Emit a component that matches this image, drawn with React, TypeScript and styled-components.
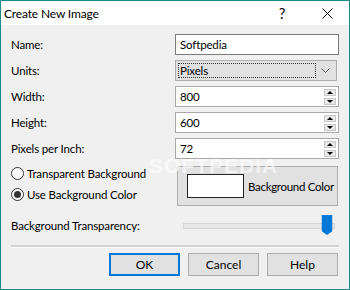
import * as React from "react";
import styled, { createGlobalStyle } from "styled-components";

const GlobalStyle = createGlobalStyle`
  html, body {
    margin: 0;
    padding: 0;
    background: #ffffff;
  }
  body {
    font-family: "Lato", "Liberation Sans", sans-serif;
    font-size: 11.5px;
    letter-spacing: -0.15px;
    color: #000;
  }
`;

const Window = styled.div`
  position: relative;
  width: 350px;
  height: 290px;
  box-sizing: border-box;
  border: 1px solid #1c8b8b;
  background: #f0f0f0;
  display: flex;
  flex-direction: column;
  overflow: hidden;
`;

const TitleBar = styled.div`
  height: 24px;
  background: #ffffff;
  display: flex;
  align-items: center;
  padding-left: 3px;
  font-size: 12px;
`;

const Title = styled.span`
  flex: 1;
`;

const TitleButton = styled.div<{ width: number }>`
  width: ${(props) => props.width}px;
  height: 24px;
  display: flex;
  align-items: center;
  justify-content: center;
  font-size: 15px;
`;

const Body = styled.div`
  flex: 1;
  padding: 9px 10px 0 10px;
  display: flex;
  flex-direction: column;
`;

const FormGrid = styled.div`
  display: grid;
  grid-template-columns: 164px 164px;
  grid-auto-rows: 21px;
  row-gap: 5px;
  align-items: center;
`;

const Label = styled.label`
  line-height: 21px;
  white-space: nowrap;
`;

const TextBox = styled.div`
  box-sizing: border-box;
  height: 21px;
  background: #fff;
  border: 1px solid #7a7a7a;
  display: flex;
  align-items: center;
  padding-left: 4px;
`;

const SpinBox = styled(TextBox)`
  padding-right: 1px;
  border-color: #a9a9a9;
`;

const SpinValue = styled.span`
  flex: 1;
`;

const SpinButtons = styled.div`
  display: flex;
  flex-direction: column;
  gap: 2px;
  margin-right: 1px;
`;

const SpinButton = styled.div`
  width: 12px;
  height: 7px;
  box-sizing: border-box;
  background: #e8e8e8;
  border: 1px solid #c8c8c8;
  display: flex;
  align-items: center;
  justify-content: center;
`;

const Combo = styled.div`
  box-sizing: border-box;
  height: 21px;
  background: #e1e1e1;
  border: 1px solid #adadad;
  display: flex;
  align-items: center;
  padding: 2px;
  margin-right: 2px;
`;

const ComboFocus = styled.div`
  flex: 1;
  height: 100%;
  box-sizing: border-box;
  border: 1px dotted #333;
  display: flex;
  align-items: center;
  padding-left: 1px;
`;

const ComboArrow = styled.div`
  width: 18px;
  display: flex;
  justify-content: center;
`;

const ColorSection = styled.div`
  margin-top: 7px;
  display: grid;
  grid-template-columns: 164px 164px;
`;

const RadioColumn = styled.div`
  display: flex;
  flex-direction: column;
  gap: 6px;
`;

const RadioRow = styled.div`
  height: 15px;
  display: flex;
  align-items: center;
  gap: 3px;
  white-space: nowrap;
`;

const RadioCircle = styled.div<{ checked?: boolean }>`
  width: 13px;
  height: 13px;
  box-sizing: border-box;
  border-radius: 50%;
  border: 1px solid #333;
  background: #fff;
  display: flex;
  align-items: center;
  justify-content: center;
  &::after {
    content: "";
    display: ${(props) => (props.checked ? "block" : "none")};
    width: 7px;
    height: 7px;
    border-radius: 50%;
    background: #333;
  }
`;

const ColorGroup = styled.div`
  margin: 0 1px 0 2px;
  height: 40px;
  box-sizing: border-box;
  background: #e1e1e1;
  border: 1px solid #adadad;
  display: flex;
  align-items: center;
  padding-left: 9px;
  gap: 4px;
  white-space: nowrap;
  letter-spacing: -0.3px;
`;

const Swatch = styled.div<{ color: string }>`
  width: 57px;
  height: 24px;
  flex-shrink: 0;
  box-sizing: border-box;
  background: ${(props) => props.color};
  border: 1px solid #222;
`;

const SliderRow = styled.div`
  margin-top: 9px;
  height: 20px;
  display: grid;
  grid-template-columns: 172px 1fr;
  align-items: center;
`;

const SliderTrack = styled.div`
  position: relative;
  height: 4px;
  margin-right: 4px;
  background: #e7e7e7;
  border: 1px solid #d6d6d6;
`;

const SliderThumb = styled.div`
  position: absolute;
  top: -9px;
  width: 11px;
  height: 20px;
  transform: translateX(-50%);
`;

const Separator = styled.div`
  margin-top: 10px;
  height: 2px;
  background: #d3d3d3;
  border-bottom: 1px solid #fafafa;
`;

const ButtonRow = styled.div`
  margin-top: 5px;
  display: flex;
  justify-content: flex-end;
  gap: 8px;
  padding-right: 1px;
`;

const Button = styled.button<{ primary?: boolean }>`
  width: 71px;
  height: 23px;
  box-sizing: border-box;
  background: #e1e1e1;
  border: ${(props) => (props.primary ? "2px solid #0078d7" : "1px solid #adadad")};
  font-family: inherit;
  font-size: 12px;
  color: #000;
  padding: 0;
`;

const Watermark = styled.div`
  position: absolute;
  left: 148px;
  top: 157px;
  font-family: "Liberation Sans", sans-serif;
  font-weight: bold;
  font-size: 21px;
  line-height: 15px;
  letter-spacing: 1px;
  color: rgba(255, 255, 255, 0.65);
  pointer-events: none;
`;

const Spin: React.FunctionComponent<{ value: string }> = ({ value }) => (
  <SpinBox>
    <SpinValue>{value}</SpinValue>
    <SpinButtons>
      <SpinButton>
        <svg width="6" height="3" viewBox="0 0 6 3">
          <polygon points="0,3 6,3 3,0" fill="#000" />
        </svg>
      </SpinButton>
      <SpinButton>
        <svg width="6" height="3" viewBox="0 0 6 3">
          <polygon points="0,0 6,0 3,3" fill="#000" />
        </svg>
      </SpinButton>
    </SpinButtons>
  </SpinBox>
);

export default function App() {
  const transparency = 95;
  return (
    <>
      <GlobalStyle />
      <Window>
        <TitleBar>
          <Title>Create New Image</Title>
          <TitleButton width={46}>?</TitleButton>
          <TitleButton width={44}>
            <svg width="11" height="11" viewBox="0 0 11 11">
              <path d="M0.5 0.5 L10.5 10.5 M10.5 0.5 L0.5 10.5" stroke="#000" strokeWidth="1" />
            </svg>
          </TitleButton>
        </TitleBar>
        <Body>
          <FormGrid>
            <Label>Name:</Label>
            <TextBox>Softpedia</TextBox>
            <Label>Units:</Label>
            <Combo>
              <ComboFocus>Pixels</ComboFocus>
              <ComboArrow>
                <svg width="9" height="5" viewBox="0 0 9 5">
                  <path d="M0.5 0.5 L4.5 4.5 L8.5 0.5" stroke="#555" fill="none" />
                </svg>
              </ComboArrow>
            </Combo>
            <Label>Width:</Label>
            <Spin value="800" />
            <Label>Height:</Label>
            <Spin value="600" />
            <Label>Pixels per Inch:</Label>
            <Spin value="72" />
          </FormGrid>
          <ColorSection>
            <RadioColumn>
              <RadioRow>
                <RadioCircle />
                Transparent Background
              </RadioRow>
              <RadioRow>
                <RadioCircle checked />
                Use Background Color
              </RadioRow>
            </RadioColumn>
            <ColorGroup>
              <Swatch color="#ffffff" />
              Background Color
            </ColorGroup>
          </ColorSection>
          <SliderRow>
            <Label>Background Transparency:</Label>
            <SliderTrack>
              <SliderThumb style={{ left: `${transparency}%` }}>
                <svg width="11" height="20" viewBox="0 0 11 20">
                  <polygon points="0,0 11,0 11,16 5.5,20 0,16" fill="#0078d7" />
                </svg>
              </SliderThumb>
            </SliderTrack>
          </SliderRow>
          <Separator />
          <ButtonRow>
            <Button primary>OK</Button>
            <Button>Cancel</Button>
            <Button>Help</Button>
          </ButtonRow>
        </Body>
        <Watermark>SOFTPEDIA</Watermark>
      </Window>
    </>
  );
}
